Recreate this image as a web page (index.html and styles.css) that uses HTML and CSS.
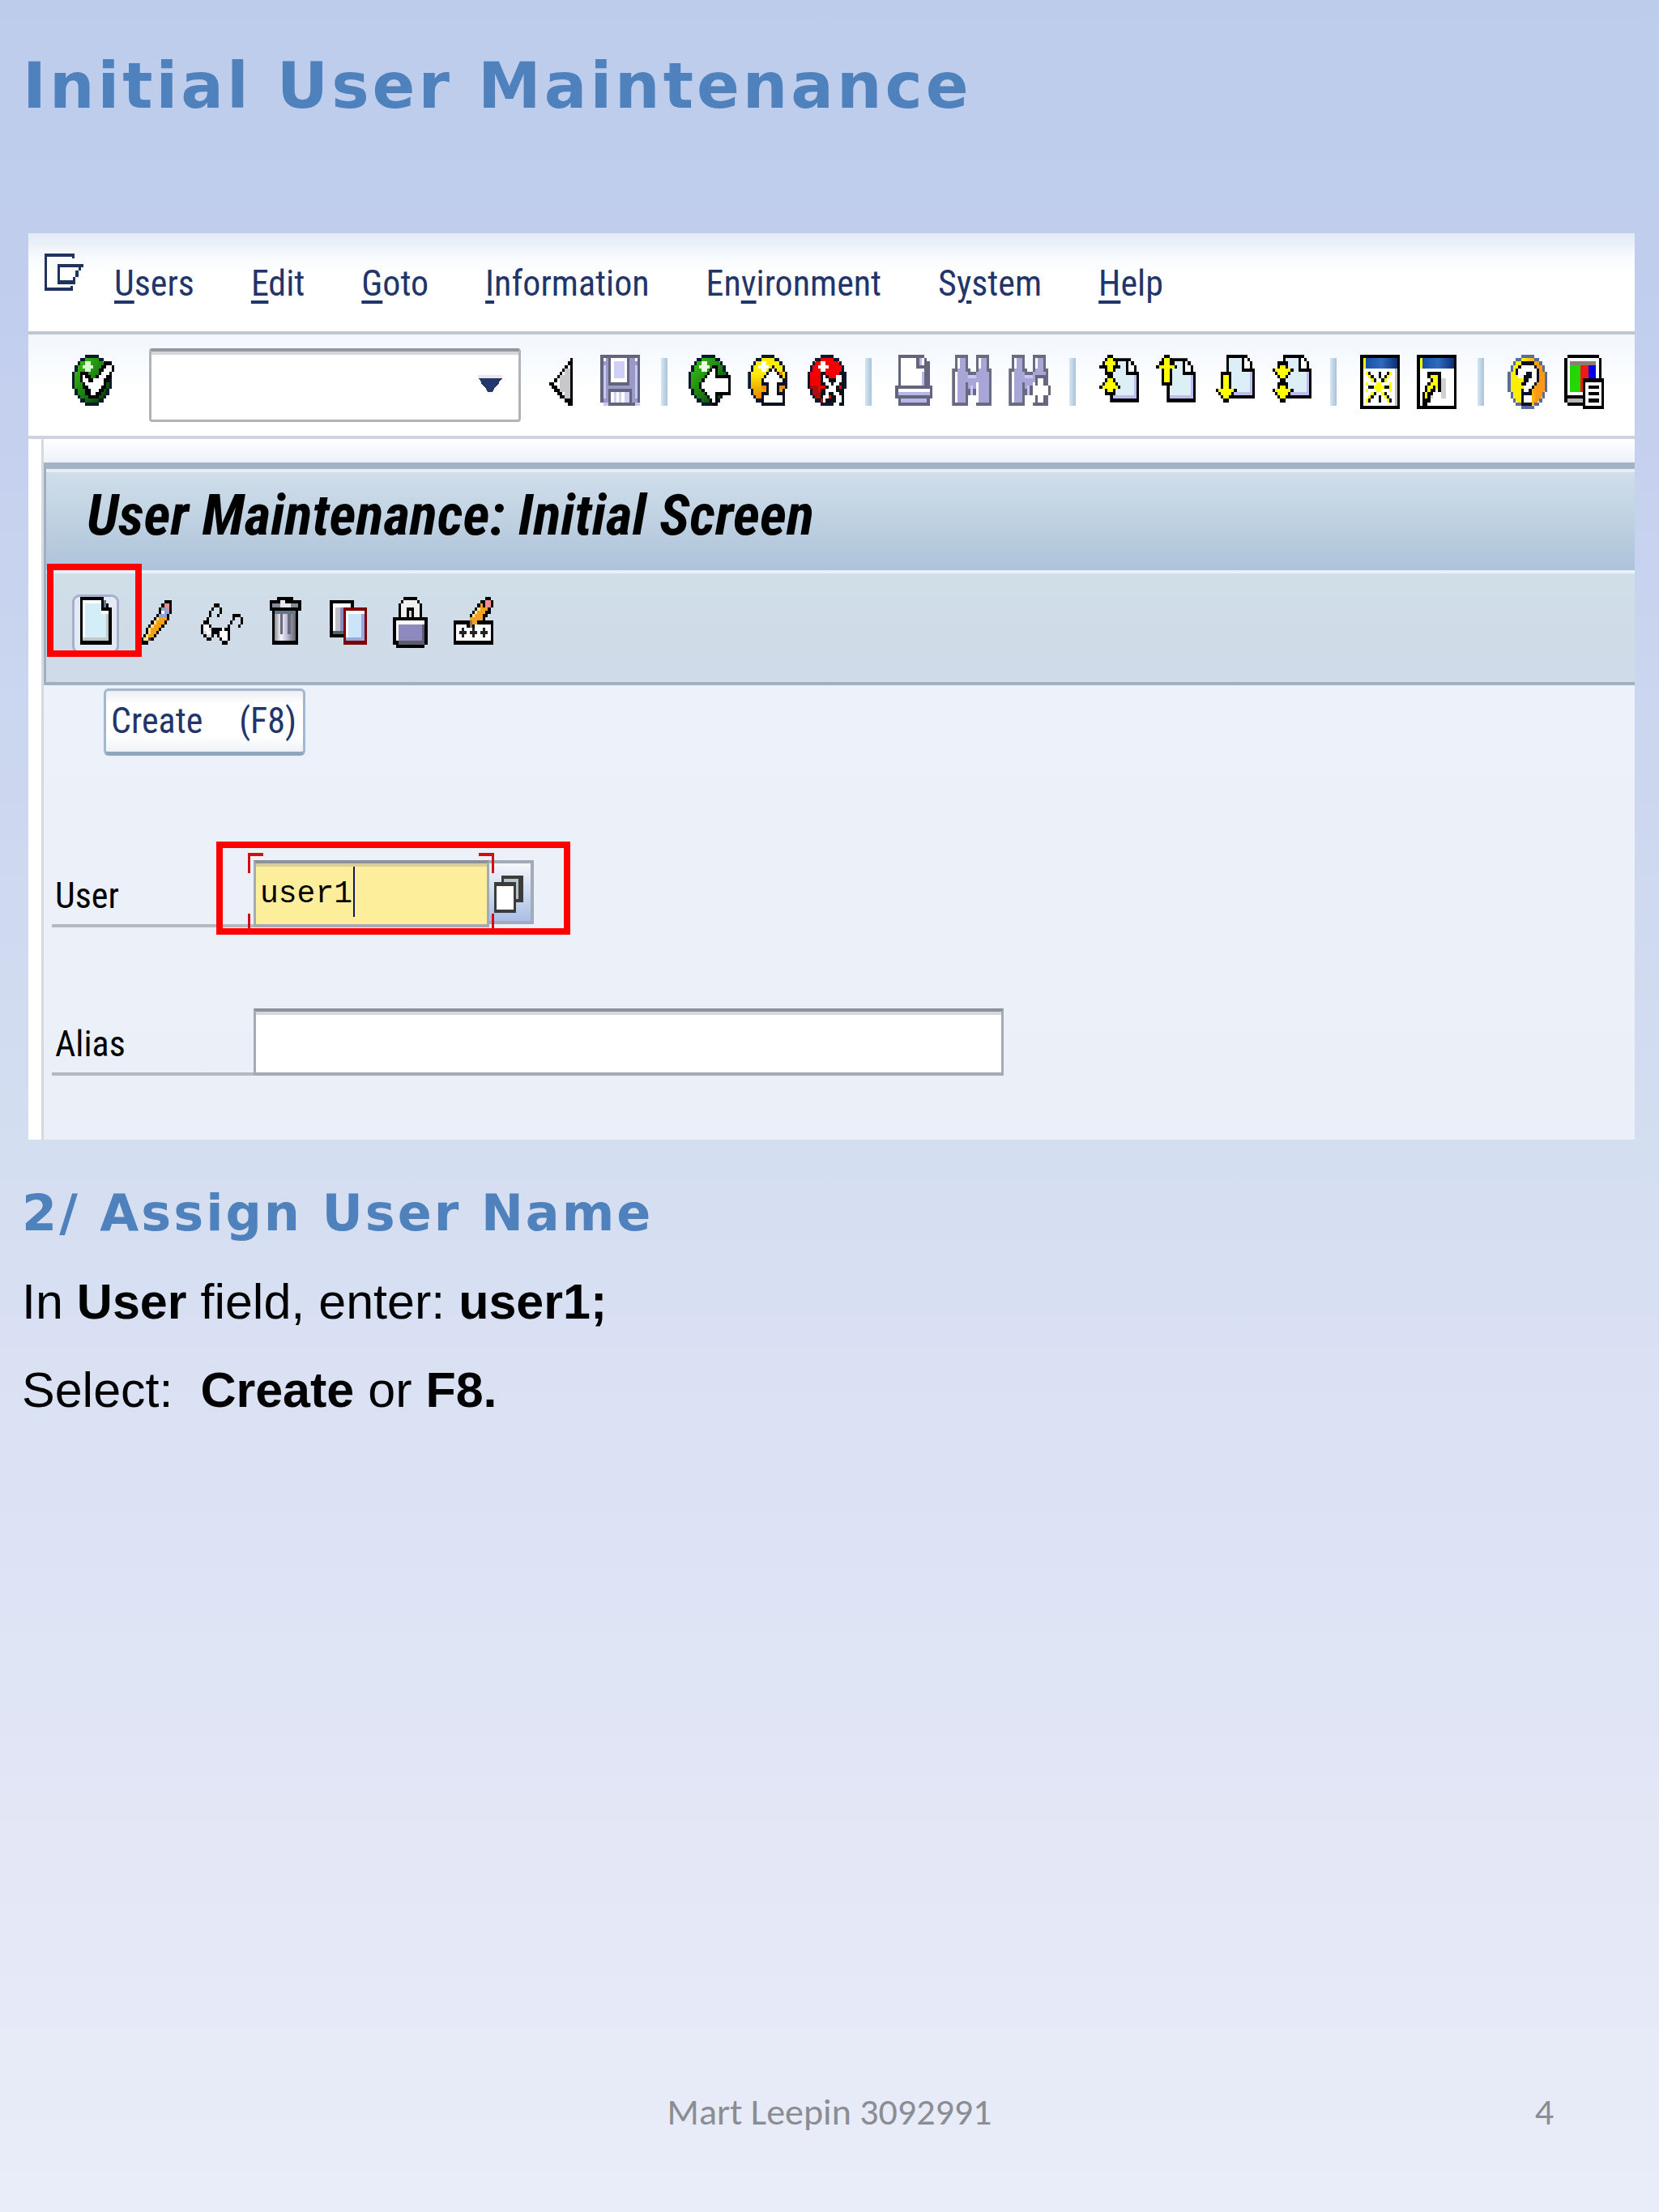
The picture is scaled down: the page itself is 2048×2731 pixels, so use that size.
FILE: index.html
```html
<!DOCTYPE html>
<html lang="en">
<head>
<meta charset="utf-8">
<meta name="viewport" content="width=device-width, initial-scale=1">
<title>Initial User Maintenance</title>
<link rel="stylesheet" href="styles.css">
</head>
<body class="slide">
<svg class="defs" aria-hidden="true">
  <defs>
    <linearGradient id="green" x1="0" y1="0" x2="1" y2="1"><stop offset=".2" stop-color="#2fb010"/><stop offset=".55" stop-color="#1c7a14"/><stop offset="1" stop-color="#032404"/></linearGradient>
    <linearGradient id="amber" x1="0" y1="0" x2="0" y2="1"><stop offset=".35" stop-color="#ffee00"/><stop offset="1" stop-color="#e07000"/></linearGradient>
    <linearGradient id="gold" x1="0" y1="0" x2="1" y2="0"><stop offset=".4" stop-color="#ffee00"/><stop offset=".75" stop-color="#ff9a10"/></linearGradient>
    <linearGradient id="title" x1="0" y1="0" x2="1" y2="0"><stop offset="0" stop-color="#1550a8"/><stop offset=".5" stop-color="#2f6cc0"/><stop offset="1" stop-color="#0a3078"/></linearGradient>
    <linearGradient id="can" x1="0" y1="0" x2="1" y2="0"><stop offset="0" stop-color="#8e8e96"/><stop offset=".3" stop-color="#f4f4fa"/><stop offset=".6" stop-color="#b8b8d8"/><stop offset="1" stop-color="#5e6468"/></linearGradient>
    <symbol id="ring" viewBox="0 0 16 16" preserveAspectRatio="none">
      <path fill="none" stroke="#0c1830" d="M5 .5h5M3 1.5h2M10 1.5h2M2 2.5h1M12 2.5h1M1 3.5h1M13 3.5h1M1 4.5h1M13 4.5h1M0 5.5h1M14 5.5h1M0 6.5h1M14 6.5h1M0 7.5h1M14 7.5h1M0 8.5h1M14 8.5h1M0 9.5h1M14 9.5h1M1 10.5h1M13 10.5h1M1 11.5h1M13 11.5h1M2 12.5h1M12 12.5h1M3 13.5h2M10 13.5h2M5 14.5h5"/>
    </symbol>
    <symbol id="glass" viewBox="0 0 16 16" preserveAspectRatio="none">
      <path fill="#6a6a80" d="M1 0h5v4h1v1h2V4h0V0h5v4h1v11H9v-3H6v3H0V4h1z"/>
      <path fill="#a8a6d6" d="M2 1h3v4h1v1h3V5h1V1h3v4h1v9h-4v-4H6V8H5v6H1V5h1z"/>
      <path fill="#c8c6f4" d="M6 6h3v1H6zM7 9h1v3H7z"/>
      <path fill="#fff" d="M2 1h1v3H2zM1 5h1v9H1zM10 1h1v3h-1zM9 8h1v6H9z"/>
    </symbol>
    <symbol id="sheet" viewBox="0 0 11 13" preserveAspectRatio="none">
      <path fill="#000" d="M0 0h8v1h1v1h1v2h1v9H0z"/>
      <path fill="#dceef6" d="M1 1h5v4h4v7H1z"/>
      <path fill="#bcbcf0" d="M9 5h1v7H1v-1h8z"/>
      <path fill="#fff" d="M7 1h1v1h1v2H7z"/>
    </symbol>
  </defs>
</svg>

<header class="slide-head"><h1>Initial User Maintenance</h1></header>

<main>
<section class="window" aria-label="User Maintenance: Initial Screen">
  <nav class="menubar" aria-label="Menu bar">
    <button class="menu-icon" aria-label="Window menu"><svg viewBox="0 0 15 11" preserveAspectRatio="none"><path fill="none" stroke="#1f3360" d="M11 1.5V.5H.5v10h10V9.5"/><path fill="none" stroke="#1f3360" d="M5.5 3.5H15M13.5 4v1M12.5 5v2M11.5 7v1.5H5.5V3"/></svg></button>
    <button><u>U</u>sers</button>
    <button><u>E</u>dit</button>
    <button><u>G</u>oto</button>
    <button><u>I</u>nformation</button>
    <button>En<u>v</u>ironment</button>
    <button>S<u>y</u>stem</button>
    <button><u>H</u>elp</button>
  </nav>

  <div class="toolbar" role="toolbar" aria-label="Standard toolbar">
    <button class="tool" aria-label="Enter"><svg viewBox="0 0 16 16" preserveAspectRatio="none">
      <ellipse cx="7.5" cy="7.5" rx="7" ry="7" fill="url(#green)"/><path fill="#d8ffd0" d="M5 2h2v1h1v1H7v1H5V4H4V3h1z"/><use href="#ring" width="16" height="16"/>
      <path fill="#000" d="M12 2h3v1h1v2h-1v2h-1v1h-1v2h-1v1h-1v1h-1v1H6v-1H5v-2H4V8H3V5h3v1h1v1h2V6h1V4h1V3h1z"/><path fill="#fff" d="M13 3h2v2h-1v1h-1v1h-1v2h-1v1h-1v1H9v1H7v-2H6V9H5V8H4V6h1v1h1v1h2V7h2V6h1V5h1V4h1z"/></svg></button>
    <div class="command">
      <input type="text" aria-label="Command field">
      <button aria-label="Command history"><svg viewBox="0 0 30 21"><path fill="#e8e8ee" d="M0 0h30v4H0z"/><path fill="#24386c" d="M0 4h30l-3 3-2 5-4 3-3 6h-6l-3-6-4-3-2-5z"/></svg></button>
    </div>
    <div class="group">
      <button class="tool" aria-label="Collapse"><svg viewBox="0 0 16 16" preserveAspectRatio="none"><path fill="#fff" d="M11 2v12L4 8z"/><path fill="#c8c8cc" d="M9 4h2v9H9zM7 6h2v5H7z"/><path fill="none" stroke="#000" d="M11.5 1v14M10 2.5h1M9 3.5h1M8 4.5h1M7 5.5h1M6 6.5h1M5 7.5h1M3 8.5h2M4 9.5h2M5 10.5h2M6 11.5h2M7 12.5h2M9 13.5h2M10 14.5h1"/></svg></button>
      <button class="tool" aria-label="Save"><svg viewBox="0 0 16 16" preserveAspectRatio="none"><path fill="#64647c" d="M1 0h15v15H2v-1H1z"/><path fill="#9a9ac8" d="M2 1h2v8h8V1h3v13h-2v-4H4v4H2z"/><path fill="#c8c8f4" d="M2 3h1v10H2zM14 3h1v10h-1zM2 14h2v1H2zM14 14h2v1h-2z"/><path fill="#fff" d="M5 1h6v7H5zM5 11h7v3H5zM2 1h1v1H2zM14 1h1v1h-1z"/><path fill="#d0cff6" d="M6 2h4v5H6zM6 11h1v3H6zM8 11h1v3H8zM10 11h2v3h-2z"/></svg></button>
    </div>
    <span class="sep"></span>
    <div class="group">
      <button class="tool" aria-label="Back"><svg viewBox="0 0 16 16" preserveAspectRatio="none"><ellipse cx="7.5" cy="7.5" rx="7" ry="7" fill="url(#green)"/><use href="#ring" width="16" height="16"/><path fill="#e8ffe0" d="M5 2h2v1h1v1H7v1H5V4H4V3h1z"/>
      <path fill="#000" d="M9 3h2v3h5v6h-5v3H9v-1H8v-1H7v-1H6v-1H5v-1H4V8h1V7h1V6h1V5h1V4h1z"/><path fill="#fff" d="M9 4h1v3h5v4h-5v3H9v-1H8v-1H7v-1H6v-1H5V8h1V7h1V6h1V5h1z"/></svg></button>
      <button class="tool" aria-label="Exit"><svg viewBox="-1 0 16 16" preserveAspectRatio="none"><ellipse cx="7.5" cy="7.5" rx="7" ry="7" fill="url(#amber)"/><use href="#ring" width="16" height="16"/><path fill="#fff" d="M5 2h2v1h1v1H7v1H5V4H4V3h1z"/>
      <path fill="#0c1020" d="M9 3h1v1h1v1h1v1h1v1h1v2h-2v2h2v4H5v-4h2V9H5V7h1V6h1V5h1V4h1z"/><path fill="#fff" d="M9 4h1v1h1v1h1v1h1v1h-2v4h2v2H6v-2h2V8H6V7h1V6h1V5h1z"/><path fill="#f08c10" d="M5 9h2v1H5zM12 9h2v1h-2zM12 5h1v1h-1z"/></svg></button>
      <button class="tool" aria-label="Cancel"><svg viewBox="-2 0 16 16" preserveAspectRatio="none"><ellipse cx="7.5" cy="7.5" rx="7" ry="7" fill="#f40000"/><path fill="#a81010" d="M1 9h3v2h2v3H3v-2H1z"/><use href="#ring" width="16" height="16"/><path fill="#fff" d="M5 2h2v1h1v1H7v1H5V4H4V3h1z"/>
      <path fill="#081418" d="M5 5h2v1h1v1h3V6h1V5h2v10h-2v-1h-1v-1h0v1H6v-1H5v-3h2V9H5z"/><path fill="#fff" d="M6 6h1v1h1v1h1v1h1V8h1V6h2v2h-1v1h-1v2h1v1h1v2h-2v-2h-1v-1H8v2H7v1H6v-2h1v-2h1V9H7V8H6z"/><path fill="#e01010" d="M12 9h1v1h-1zM5 9h1v1H5zM8 12h1v1H8z"/></svg></button>
    </div>
    <span class="sep"></span>
    <div class="group">
      <button class="tool" aria-label="Print"><svg viewBox="-1 0 16 16" preserveAspectRatio="none"><path fill="#64647c" d="M1 0h10v1h1v1h1v7h1v4h-1v2H1v-2H0V9h1z"/><path fill="#fff" d="M2 1h6v3h3v5H2zM1 10h12v1H1zM10 1h1v2h-1z"/><path fill="#b8b6e8" d="M10 5h1v4h-1zM9 1h1v2H9zM1 11h12v1H1zM2 13h10v1H2z"/></svg></button>
      <button class="tool" aria-label="Find"><svg viewBox="-1 0 16 16" preserveAspectRatio="none"><use href="#glass" width="16" height="16"/></svg></button>
      <button class="tool" aria-label="Find next"><svg viewBox="-1 0 16 16" preserveAspectRatio="none"><use href="#glass" width="16" height="16"/><path fill="#64647c" d="M10 6h4v3h2v3h-2v3h-4v-3H8V9h2z"/><path fill="#fff" d="M11 7h2v2h2v3h-2v2h-2v-2H9V9h2z"/></svg></button>
    </div>
    <span class="sep"></span>
    <div class="group">
      <button class="tool" aria-label="First page"><svg viewBox="-1 0 16 16" preserveAspectRatio="none"><use href="#sheet" x="4" y="1" width="11" height="13"/><path fill="#000" d="M3 0h2v1h1v1h1v1h1v1H6v1H5v1h0v1h1v1h1v1h1v1H6v2H2v-2H0V9h1V8h1V7h1V6H2V4H0V3h1V2h1V1h1z"/><path fill="#ff0" d="M3 1h2v1h1v1h1v0H5v2H3V3H1V3h1V2h1zM3 7h2v1h1v1h1v1H5v1H3v-1H1V9h1V8h1z"/></svg></button>
      <button class="tool" aria-label="Previous page"><svg viewBox="-1 0 16 16" preserveAspectRatio="none"><use href="#sheet" x="4" y="1" width="11" height="13"/><path fill="#000" d="M3 0h2v1h1v1h1v1h1v1H6v5H2V4H0V3h1V2h1V1h1z"/><path fill="#ff0" d="M3 1h2v2h2v1H5v4H3V4H1V3h2z"/></svg></button>
      <button class="tool" aria-label="Next page"><svg viewBox="-2 0 16 16" preserveAspectRatio="none"><use href="#sheet" x="4" y="0" width="11" height="13"/><path fill="#000" d="M2 5h4v5h2v1H7v1H6v1H5v1H3v-1H2v-1H1v-1H0v-1h2z"/><path fill="#ff0" d="M3 6h2v4h2v1H6v1H5v1H3v-1H2v-1H1v-1h2z"/></svg></button>
      <button class="tool" aria-label="Last page"><svg viewBox="-2 0 16 16" preserveAspectRatio="none"><use href="#sheet" x="4" y="0" width="11" height="13"/><path fill="#000" d="M2 2h4v2h2v1H7v1H6v1H5v1h1v2h2v1H7v1H6v1H5v1H3v-1H2v-1H1v-1H0v-1h2V8h1V7H2V6H1V5H0V4h2z"/><path fill="#ff0" d="M3 3h2v1h2v1H6v1H5v1H3V6H2V5H1V4h2zM3 9h2v1h2v1H6v1H5v1H3v-1H2v-1H1v-1h2z"/></svg></button>
    </div>
    <span class="sep"></span>
    <div class="group">
      <button class="tool" aria-label="New session"><svg viewBox="-1 0 16 16" preserveAspectRatio="none"><path d="M0 0h15v16H0z"/><path fill="#fff" d="M1 1h13v14H1z"/><path fill="#c0c0c0" d="M13 4h1v11h-1z"/><path fill="url(#title)" d="M2 1h12v3H2z"/><path fill="#ff0" d="M1 1h1v3H1z"/><path fill="none" stroke="#ff0" d="M2 5.5h1M11 5.5h1M3 6.5h1M10 6.5h1M4 7.5h1M9 7.5h1M2 8.5h1M6 8.5h2M11 8.5h1M5 9.5h4M3 9.5h1M10 9.5h2M2 10.5h1M6 10.5h2M11 10.5h1M4 11.5h1M8 11.5h1M3 12.5h1M9 12.5h1M2 13.5h1M10 13.5h1"/><path fill="none" stroke="#0c1020" d="M3 5.5h1M7 5.5h1M10 5.5h1M4 6.5h1M7 6.5h1M9 6.5h1M5 7.5h1M8 7.5h1M3 9.5h2M9 9.5h2M5 11.5h1M9 11.5h1M4 12.5h1M7 12.5h1M10 12.5h1M3 13.5h1M7 13.5h1M11 13.5h1"/></svg></button>
      <button class="tool" aria-label="Create shortcut"><svg viewBox="-1 0 16 16" preserveAspectRatio="none"><path d="M0 0h15v16H0z"/><path fill="#fff" d="M1 1h13v14H1z"/><path fill="url(#title)" d="M2 1h12v3H2z"/><path fill="#ff0" d="M1 1h1v3H1z"/><path fill="#d0d0d0" d="M9 7h2v6H9v-2H6v2H5v-2h4z"/><path d="M4 5h5v6H8v-1H7v1H6v1H5v2H4v1H2v-4h1V9h1V8h1V7H4z"/><path fill="#ff0" d="M5 6h3v4H7V9H6v1H5v1H4v2H3v-2h1V9h1V8h1V7H5z"/></svg></button>
    </div>
    <span class="sep"></span>
    <div class="group">
      <button class="tool" aria-label="Help"><svg viewBox="-1 0 16 16" preserveAspectRatio="none"><ellipse cx="7.5" cy="7.8" rx="7" ry="7.5" fill="url(#gold)"/><path fill="none" stroke="#5a6c9c" d="M5 .5h5M3 1.5h2M10 1.5h2M2 2.5h1M12 2.5h1M1 3.5h1M13 3.5h1M1 4.5h1M13 4.5h1M0 5.5h1M14 5.5h1M0 6.5h1M14 6.5h1M0 7.5h1M14 7.5h1M0 8.5h1M14 8.5h1M0 9.5h1M14 9.5h1M0 10.5h1M14 10.5h1M1 11.5h1M13 11.5h1M1 12.5h1M13 12.5h1M2 13.5h1M12 13.5h1M3 14.5h2M10 14.5h2M5 15.5h5"/><path fill="#0c1020" d="M5 2h5v1h1v1h1v4h-1v1h-1v1H9v5H6v-5h1V9H5V8h1V7H4V6H3V4h1V3h1zM5 10h1v5H5z"/><path fill="#fff" d="M5 3h5v1h1v4h-1v1H9v1H8v1H6V9h1V8h1V7h1V5H7v1H6v1H4V4h1zM6 12h3v2H6z"/></svg></button>
      <button class="tool" aria-label="Customize layout"><svg viewBox="-1 0 16 16" preserveAspectRatio="none"><path d="M1 0h12v1h1v6h1v9H8v-1H1v-1H0V1h1z"/><path fill="#fff" d="M1 1h12v6H8v5H1z"/><path fill="#b8b8b8" d="M1 13h7v1H1z"/><path fill="#888070" d="M2 2h10v1H2z"/><path fill="#22d800" d="M2 3h4v8H2z"/><path fill="#f21818" d="M6 3h3v4H8v4H6z"/><path fill="#0000ec" d="M9 3h3v4H9z"/><path d="M7 7h8v9H7z"/><path fill="#fff" d="M8 8h6v7H8z"/><path d="M9 9h4v1H9zM9 11h4v1H9zM9 13h4v1H9z"/></svg></button>
    </div>
  </div>

  <div class="screen">
    <div class="screen-head">
      <h2>User Maintenance: Initial Screen</h2>
      <div class="app-toolbar" role="toolbar" aria-label="Application toolbar">
        <div class="create">
          <button class="tool focused" aria-label="Create"><svg viewBox="0 0 16 16" preserveAspectRatio="none"><path d="M2 0h9v1h1v1h1v1h1v11H2z"/><path fill="#fff" d="M3 1h7v3h3v9H3z"/><path fill="#d4eef8" d="M4 2h6v3h2v7H4z"/><path fill="#c4c8c8" d="M3 12h10v1H3zM12 5h1v8h-1z"/><path fill="#5c7888" d="M11 1h1v2h-1z"/></svg></button>
          <span class="callout"></span>
          <div class="tooltip" role="tooltip"><span>Create</span><span>(F8)</span></div>
        </div>
        <button class="tool" aria-label="Change"><svg viewBox="-1 0 16 16" preserveAspectRatio="none"><path fill="none" stroke="#f8a010" d="M7 6.5h3M6 7.5h3M5 8.5h3M4 9.5h3M4 10.5h2M3 11.5h2"/><path fill="none" stroke="#ffe490" d="M6 6.5h1M5 7.5h1M4 8.5h1M3 9.5h1M3 10.5h1M2 11.5h1M1 12.5h2"/><path fill="none" stroke="#8ca4d4" d="M8 3.5h2M8 4.5h3M7 5.5h3"/><path fill="none" stroke="#fff" d="M8 4.5h1M9 2.5h1"/><path fill="none" stroke="#f48c94" d="M9 2.5h2M10 3.5h1"/><path fill="none" stroke="#5a4828" d="M3 12.5h1M1 13.5h1"/><path fill="none" stroke="#000" d="M9 1.5h3M8 2.5h1M11 2.5h1M7 3.5h1M11 3.5h1M7 4.5h1M11 4.5h1M6 5.5h1M10 5.5h1M5 6.5h1M10 6.5h1M4 7.5h1M9 7.5h1M3 8.5h1M8 8.5h1M2 9.5h1M7 9.5h1M2 10.5h1M6 10.5h1M1 11.5h1M5 11.5h1M0 12.5h1M4 12.5h1M0 13.5h3"/></svg></button>
        <button class="tool" aria-label="Display"><svg viewBox="0 0 16 16" preserveAspectRatio="none"><path fill="#fff" d="M1 7h2v3h2v1H2v-1H1zM7 9h3v4H8v-1H7z"/><path fill="none" stroke="#000" d="M5 2.5h2M4 3.5h1M7 3.5h1M3 4.5h1M7 4.5h1M3 5.5h1M6 5.5h1M12 5.5h3M2 6.5h1M12 6.5h1M15 6.5h1M1 7.5h2M11 7.5h1M15 7.5h1M0 8.5h1M3 8.5h1M10 8.5h1M14 8.5h1M0 9.5h1M4 9.5h4M9 9.5h2M0 10.5h1M4 10.5h3M10 10.5h1M1 11.5h1M4 11.5h1M6 11.5h1M10 11.5h1M2 12.5h2M7 12.5h1M10 12.5h1M8 13.5h2"/></svg></button>
        <button class="tool" aria-label="Delete"><svg viewBox="-2 0 16 16" preserveAspectRatio="none"><path d="M3 0h6v1h3v3h-1v10H1V4H0V1h3z"/><path fill="#8a8a94" d="M1 2h10v1H1z"/><path fill="#e8e8f0" d="M4 1h2v1h2v1H4z"/><path fill="url(#can)" d="M2 4h8v9H2z"/><path fill="#5e7a86" d="M2 4h8v1H2z"/><path fill="#6a6a7a" d="M4 5h1v6H4zM7 5h1v6H7z"/></svg></button>
        <button class="tool" aria-label="Copy"><svg viewBox="-1 0 16 16" preserveAspectRatio="none"><path d="M0 1h9v11H0z"/><path fill="#fff" d="M1 2h7v9H1z"/><path fill="#c0c0c4" d="M2 3h3v8H2z"/><path fill="#8c88c0" d="M4 3h1v8H4z"/><path fill="#50626a" d="M1 10h4v1H1z"/><path fill="#7c0000" d="M5 3h9v11H5z"/><path fill="#fff" d="M6 4h7v9H6z"/><path fill="#cce4fa" d="M7 5h5v7H7z"/><path fill="#98a8dc" d="M6 12h7v1H6zM12 5h1v8h-1z"/></svg></button>
        <button class="tool" aria-label="Lock/Unlock"><svg viewBox="-1 0 16 16" preserveAspectRatio="none"><path d="M4 0h5v1h1v1h1v4h2v8h-1v1H1v-1H0V6h2V2h1V1h1z"/><path fill="#f0f0f0" d="M4 1h5v1h1v4H8V3H5v3H3V2h1z"/><path fill="#cdd9e6" d="M6 4h1v2H6z"/><path fill="#fff" d="M1 7h11v1H2v5H1z"/><path fill="#8e8abf" d="M2 8h9v5H2z"/><path fill="#5c5c6c" d="M2 13h10v1H2zM11 8h1v5h-1z"/></svg></button>
        <button class="tool" aria-label="Change password"><svg viewBox="0 0 16 16" preserveAspectRatio="none"><path d="M0 7h15v7H0z"/><path fill="#fff" d="M1 8h13v5H1z"/><path fill="#222" d="M3 9h1v1h1v1H4v1H3v-1H2v-1h1zM7 9h1v1h1v1H8v1H7v-1H6v-1h1zM11 9h1v1h1v1h-1v1h-1v-1h-1v-1h1z"/><path d="M12 0h2v1h1v2h-1v2h-1v1h-1v1h-1v1H8v1H5V7h1V5h1V4h1V3h1V2h1V1h2z"/><path fill="#f8a020" d="M10 2h1v1h2v1h-1v1h-1v2H9v1H6V6h1V5h1V4h1V3h1z"/><path fill="#ffe8a0" d="M9 3h1v1H9v1H8v1H7V5h1V4h1z"/><path fill="#f48c94" d="M12 1h2v2h-2z"/><path fill="#8a7860" d="M6 7h1v2H6z"/></svg></button>
      </div>
    </div>

    <form class="fields">
      <div class="row">
        <label for="user">User</label>
        <div class="entry user-entry">
          <input id="user" type="text" value="user1">
          <span class="caret"></span>
          <button type="button" class="match" aria-label="Possible entries for User"><svg viewBox="0 0 12 11" preserveAspectRatio="none"><path fill="#3c3c38" d="M3 0h9v8H3z"/><path fill="#b8c4cc" d="M4 1h6v6H4z"/><path fill="#3c3c38" d="M0 2h9v9H0z"/><path fill="#fff" d="M1 3h7v7H1z"/></svg></button>
          <svg class="corners" viewBox="0 0 304 102"><path fill="#d01010" d="M0 0h19v4H3v21H0zM285 0h19v25h-3V4h-16zM0 75h3v20H0zM301 75h3v20h-3z"/></svg>
          <span class="callout"></span>
        </div>
      </div>
      <div class="row">
        <label for="alias">Alias</label>
        <div class="entry"><input id="alias" type="text"></div>
      </div>
    </form>
  </div>
</section>

<section class="steps">
  <h2>2/ Assign User Name</h2>
  <p>In <b>User</b> field, enter: <b>user1;</b></p>
  <p>Select:&nbsp; <b>Create</b> or <b>F8.</b></p>
</section>
</main>

<footer class="slide-foot"><span>Mart Leepin 3092991</span><span class="page-no">4</span></footer>
</body>
</html>
```
FILE: styles.css
```css
* { box-sizing: border-box; }

.slide {
  margin: 0;
  min-height: 100vh;
  display: flex;
  flex-direction: column;
  background: linear-gradient(#bccdeb, #c1cded 12%, #d4def1 52%, #e0e5f5 77%, #e9edf9);
  font-family: "Liberation Sans", Arial, sans-serif;
  color: #000;
}

.defs { position: absolute; width: 0; height: 0; }

h1, h2, p { margin: 0; }

button {
  padding: 0;
  border: 0;
  background: none;
  color: inherit;
  font: inherit;
}

svg { display: block; shape-rendering: crispEdges; }

.slide-head { height: 288px; padding: 60px 28px 0; }

.slide-head h1,
.steps h2 {
  font-family: "Arial Black", "DejaVu Sans", sans-serif;
  font-weight: 900;
  color: #4f81bd;
}

.slide-head h1 { font-size: 78px; line-height: 92px; letter-spacing: 4px; }

.window {
  margin: 0 30px 0 35px;
  background: #fff;
  font-family: "Roboto Condensed", "Liberation Sans Narrow", "Liberation Sans", sans-serif;
}

.menubar {
  height: 125px;
  padding: 0 20px;
  display: flex;
  gap: 70px;
  border-bottom: 4px solid #c0c6d0;
  background: linear-gradient(#e2eaf4, #f8fafd 30px, #fff 50px);
  color: #22356a;
  font-size: 44px;
  line-height: 125px;
}

.menubar u { text-decoration-thickness: 4px; text-underline-offset: 6px; }

.menu-icon { align-self: flex-start; margin: 25px -32px 0 0; }
.menu-icon svg { width: 48px; height: 46px; }

.toolbar {
  height: 129px;
  padding: 17px 0 0 54px;
  display: flex;
  align-items: flex-start;
  border-bottom: 4px solid #cdd2de;
  background: linear-gradient(#f1f6fd, #fff 70px);
}

.group { display: flex; gap: 18px; }
.tool { flex: none; margin-top: 8px; }
.tool svg { width: 52px; height: 67px; overflow: visible; }

.sep {
  width: 8px;
  height: 59px;
  margin: 12px 26px 0;
  background: linear-gradient(90deg, #d6e6f2, #a9c3da);
}

.command {
  width: 459px;
  height: 91px;
  margin: 0 25px 0 43px;
  display: flex;
  align-items: center;
  padding-right: 20px;
  border: 3px solid #b0b3b8;
  border-top: 4px solid #92989f;
  border-radius: 4px;
  background: #fff;
  box-shadow: inset 0 4px #d4d6dc;
}

.command input {
  flex: 1;
  min-width: 0;
  height: 70px;
  border: 0;
  outline: 0;
  background: none;
  font: inherit;
  font-size: 44px;
}

.command svg { width: 30px; height: 21px; margin-bottom: 6px; }

.screen {
  margin-left: 16px;
  padding-top: 29px;
  border-left: 3px solid #d5d9e0;
  background: linear-gradient(#fff, #edf1f9 29px, #ebeff7);
}

.screen-head {
  border: solid #9fb0c2;
  border-width: 8px 0 4px 3px;
  border-top-color: #a3b3c4;
}

.screen-head h2 {
  height: 125px;
  padding-left: 50px;
  border-top: 4px solid #e6eff6;
  background: linear-gradient(#d0deea, #c4d5e4 35%, #adc3da);
  font-size: 71px;
  font-style: italic;
  line-height: 106px;
}

.app-toolbar {
  height: 138px;
  padding: 21px 0 0 35px;
  display: flex;
  align-items: flex-start;
  gap: 26px;
  border-top: 4px solid #e6f1f8;
  background: linear-gradient(#d0dee8, #cfdbe8);
}

.create { position: relative; }

.focused { border-radius: 6px; box-shadow: 0 0 0 3px #a4b0d0; background: #e4eaf4; }

.callout { position: absolute; border: 8px solid #f00; pointer-events: none; }

.create .callout { left: -34px; top: -33px; width: 117px; height: 115px; }

.tooltip {
  position: absolute;
  left: 36px;
  top: 121px;
  z-index: 1;
  width: 249px;
  height: 83px;
  padding: 0 8px 0 6px;
  display: flex;
  justify-content: space-between;
  border: 3px solid #a3b8cf;
  border-bottom: 5px solid #8fa6bd;
  border-radius: 6px;
  background: linear-gradient(#eceef4, #fff 16px, #fff 55px, #eef2f6);
  color: #22356a;
  font-size: 44px;
  line-height: 75px;
}

.fields { padding: 216px 20px 79px 10px; }

.row { display: flex; height: 83px; }
.row + .row { margin-top: 100px; }

.row label {
  width: 249px;
  padding-left: 4px;
  border-bottom: 4px solid #b4b9c0;
  font-size: 44px;
  line-height: 88px;
}

.entry { position: relative; display: flex; }

.entry input {
  width: 926px;
  height: 83px;
  padding: 0 5px;
  border: solid #a6aab2;
  border-width: 4px 3px;
  border-top-color: #8d9199;
  border-radius: 0;
  outline: 0;
  background: #fff;
  box-shadow: inset 0 4px #d6d8de;
  font-family: "Liberation Mono", monospace;
  font-size: 38px;
}

.user-entry input { width: 291px; background: #fdee9c; box-shadow: inset 0 4px #d9ce9c; }

.caret { position: absolute; left: 123px; top: 8px; width: 2px; height: 62px; background: #101860; }

.match {
  width: 55px;
  height: 79px;
  padding: 4px 10px 0 6px;
  border: solid #a3abba;
  border-width: 4px 4px 4px 0;
  background: linear-gradient(#f4f6fb, #a9bfe6);
}

.match svg { width: 36px; height: 46px; }

.corners { position: absolute; left: -7px; top: -9px; width: 304px; height: 102px; }

.user-entry .callout { left: -46px; top: -23px; width: 437px; height: 115px; }

.steps { padding: 53px 27px 0; font-size: 61px; line-height: 109px; }
.steps h2 { font-size: 62px; line-height: 76px; letter-spacing: 3px; margin-bottom: 17px; }

.slide-foot {
  margin-top: auto;
  padding: 0 130px 100px;
  display: grid;
  grid-template-columns: 1fr auto 1fr;
  color: #8a8d94;
  font-family: Carlito, Lato, sans-serif;
  font-size: 46px;
  line-height: 48px;
}

.slide-foot span:first-child { grid-column: 2; }
.page-no { text-align: right; }
```
